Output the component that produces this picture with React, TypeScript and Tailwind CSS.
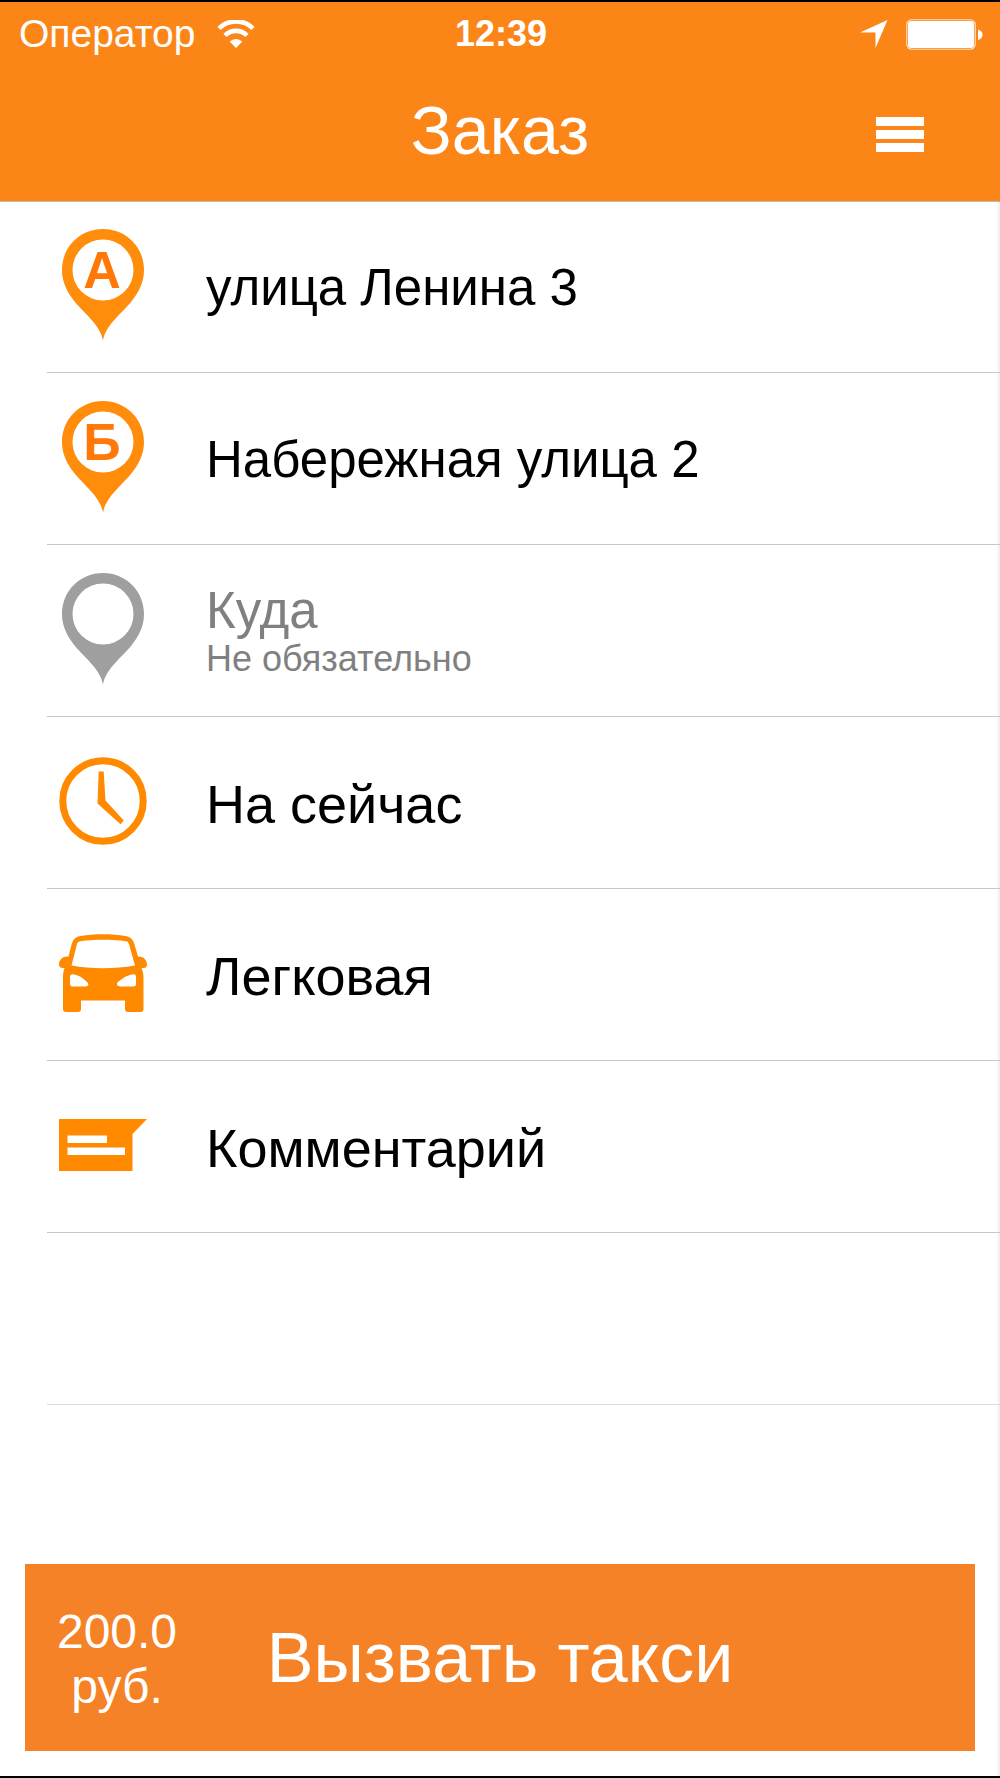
import type { ReactNode } from "react"

function WifiIcon() {
  return (
    <svg viewBox="0 0 38 28" className="h-7 w-[38px]" aria-hidden="true">
      <path d="M2 8.500a24 24 0 0 1 34 0" fill="none" stroke="#fff" strokeWidth="4.600" />
      <path d="M8 15.500a15.500 15.500 0 0 1 22 0" fill="none" stroke="#fff" strokeWidth="4.600" />
      <path d="M19 28l-6.300-6.400a9 9 0 0 1 12.600 0z" fill="#fff" />
    </svg>
  )
}

function LocationIcon() {
  return (
    <svg viewBox="0 0 28 28" className="size-7" aria-hidden="true">
      <path d="M27.500 0L15.500 28V12.500H0z" fill="#fff" />
    </svg>
  )
}

function BatteryIcon() {
  return (
    <svg viewBox="0 0 77 31" className="h-[31px] w-[77px]" aria-hidden="true">
      <rect x="0.750" y="0.750" width="68.500" height="29.500" rx="5" fill="none" stroke="#fff" strokeOpacity="0.750" strokeWidth="1.200" />
      <rect x="2" y="2" width="66" height="27" rx="3.500" fill="#fff" />
      <path d="M72 10.500c6 1 6 9.500 0 10.500z" fill="#fff" />
    </svg>
  )
}

function MenuIcon() {
  return (
    <svg viewBox="0 0 48 35" className="h-[35px] w-12" aria-hidden="true">
      <path d="M0 0h48v9H0zM0 13h48v9H0zM0 26h48v9H0z" fill="#fff" />
    </svg>
  )
}

function PinIcon({ letter, muted = false }: { letter?: string; muted?: boolean }) {
  return (
    <svg viewBox="0 0 82 112" className="h-28 w-[82px]" aria-hidden="true">
      <path
        fillRule="evenodd"
        fill={muted ? "#9f9f9f" : "#ff8c0a"}
        d="M41 0C18 0 0 18 0 41c0 12 5 22 13 32 11 13 26 24 28 39 2-15 17-26 28-39 8-10 13-20 13-32C82 18 64 0 41 0zm0 10.500a30.500 30.500 0 1 1 0 61 30.500 30.500 0 0 1 0-61z"
      />
      {letter && (
        <text x="40" y="59" textAnchor="middle" className="text-[52px] font-bold" fill="#ff7808">
          {letter}
        </text>
      )}
    </svg>
  )
}

function ClockIcon() {
  return (
    <svg viewBox="0 0 88 88" className="size-[88px]" aria-hidden="true">
      <circle cx="44" cy="44" r="40.200" fill="none" stroke="#ff8a00" strokeWidth="7" />
      <path d="M39.700 14.500h5L46.500 43.500l18.300 20-3.300 3.800L38.500 46.500z" fill="#ff8a00" />
    </svg>
  )
}

function CarIcon() {
  return (
    <svg viewBox="0 0 88 78" className="h-[78px] w-[88px]" aria-hidden="true">
      <path
        fillRule="evenodd"
        fill="#ff8a00"
        d="M9.500 22.500L13 9C14.500 5 17 2.800 21.500 2 35-.5 53-.5 66.500 2c4.500.8 7 3 8.500 7L79 22.500c6-.5 9 4 9 8.500 0 2-1.500 3-3.500 3h-2c1 3 2 5 2 9v32c0 1.800-1 3-3 3H69c-2 0-3-1.200-3-3v-8.500H22V75c0 1.800-1 3-3 3H7c-2 0-3-1.200-3-3V43c0-4 .5-6 1.500-9H4c-2.500 0-4-1-4-3.500 0-5 4-8.500 9.500-8zM18 10L12.500 31.500c20 3.500 43 3.500 63.500 0L70 10c-.6-1.800-1.500-2.500-3-2.800-14-2-32-2-46 0-1.800.4-2.600 1.200-3 2.800zM11 43v7c0 1.500.8 2.500 2.500 2.500h12c4 0 5-2 2.500-4.500-4-4-8.500-7-14-7.700-2-.2-3 .9-3 2.700zm66 0c0-1.800-1-3-3-2.700-5.500.7-10 3.700-14.500 7.200-3 2.500-1.500 5 2.500 5h12.500c1.700 0 2.500-1 2.500-2.500z"
      />
    </svg>
  )
}

function CommentIcon() {
  return (
    <svg viewBox="0 0 88 52" className="h-[52px] w-[88px]" aria-hidden="true">
      <path d="M0 0h88L73.500 15v37H0z" fill="#ff8a00" />
      <path d="M8.500 16.500H48V24H8.500zM8.500 28.500H66V36H8.500z" fill="#fff" />
    </svg>
  )
}

type Row = {
  icon: ReactNode
  title: string
  hint?: string
  large?: boolean
}

const rows: Row[] = [
  { icon: <PinIcon letter="А" />, title: "улица Ленина 3" },
  { icon: <PinIcon letter="Б" />, title: "Набережная улица 2" },
  { icon: <PinIcon muted />, title: "Куда", hint: "Не обязательно" },
  { icon: <ClockIcon />, title: "На сейчас", large: true },
  { icon: <CarIcon />, title: "Легковая", large: true },
  { icon: <CommentIcon />, title: "Комментарий", large: true },
]

function OrderRow({ icon, title, hint, large }: Row) {
  return (
    <li className="border-b border-[#c8c7cc]">
      <button type="button" className="flex h-[171px] w-full items-center text-left">
        <span className="flex w-28 shrink-0 justify-center pb-[3px]">{icon}</span>
        {hint ? (
          <span className="ml-[47px] flex flex-col pt-0.5 text-[#808080]">
            <span className="text-[51px] leading-[54px]">{title}</span>
            <span className="text-[36px] leading-[42px]">{hint}</span>
          </span>
        ) : (
          <span className={large ? "ml-[47px] pt-1 text-[54px]" : "ml-[47px] pt-1 text-[51px]"}>{title}</span>
        )}
      </button>
    </li>
  )
}

export default function App() {
  return (
    <div className="flex min-h-screen flex-col border-y-2 border-black bg-white font-['Liberation_Sans',Arial,sans-serif] text-black">
      <header className="bg-[#fb8517] text-white shadow-[0_1px_0_#c8b8b0]">
        <div className="grid h-16 grid-cols-3 items-center pr-[17px] pl-[19px]">
          <div className="flex items-center gap-[22px]">
            <span className="text-[39px]">Оператор</span>
            <WifiIcon />
          </div>
          <span className="text-center text-[36px] font-bold">12:39</span>
          <div className="flex items-center justify-end gap-[18px]">
            <LocationIcon />
            <BatteryIcon />
          </div>
        </div>
        <div className="grid h-[135px] grid-cols-3 items-center px-[76px]">
          <h1 className="col-start-2 pb-2 text-center text-[68px]">Заказ</h1>
          <button type="button" aria-label="Меню" className="justify-self-end pt-0.5">
            <MenuIcon />
          </button>
        </div>
      </header>

      <main className="flex flex-1 flex-col shadow-[inset_-5px_0_5px_-5px_rgba(0,0,0,0.15)]">
        <ul className="pl-[47px]">
          {rows.map((row) => (
            <OrderRow key={row.title} {...row} />
          ))}
          <li className="h-[172px] border-b border-[#dcdcdc]" />
        </ul>

        <div className="mt-auto p-[25px]">
          <button
            type="button"
            className="grid h-[187px] w-full grid-cols-[184px_1fr_184px] items-center bg-[#f58226] text-center text-white"
          >
            <span className="pt-0.5 text-[48px] leading-[55px]">
              200.0
              <br />
              руб.
            </span>
            <span className="pt-0.5 text-[70px]">Вызвать такси</span>
          </button>
        </div>
      </main>
    </div>
  )
}
